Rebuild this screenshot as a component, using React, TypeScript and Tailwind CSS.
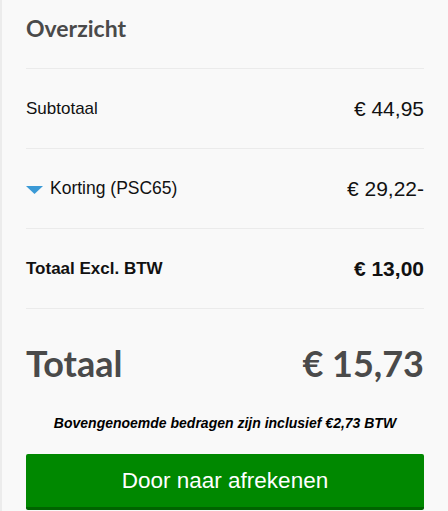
export default function App() {
  const rows = [
    { label: 'Subtotaal', value: '€ 44,95' },
    { label: 'Korting (PSC65)', value: '€ 29,22-', toggle: true },
    { label: 'Totaal Excl. BTW', value: '€ 13,00', bold: true },
  ];

  return (
    <div className="h-[511px] w-full overflow-hidden border-l-2 border-[#ececec] bg-[#f9f9f9] px-[24px] font-['Liberation_Sans',Arial,sans-serif] text-[#111]">
      <div className="h-[68px] pt-[14px]">
        <h2 className="font-['Lato',sans-serif] text-[23px] font-bold leading-[28px] text-[#4a4a4a]">Overzicht</h2>
      </div>

      {rows.map((r) => (
        <div key={r.label} className="flex h-[80px] items-center justify-between border-t border-[#ebebeb]">
          <div className={`flex items-center ${r.bold ? 'text-[17px] font-bold' : 'text-[17px]'}`}>
            {r.toggle && (
              <svg width="17" height="8" viewBox="0 0 17 8" className="mr-[7px] mt-[2px]">
                <polygon points="0,0 17,0 8.5,8" fill="#3b9ad6" />
              </svg>
            )}
            <span className={r.toggle ? 'text-[17.5px]' : ''}>{r.label}</span>
          </div>
          <span className={r.bold ? 'text-[21px] font-bold' : 'text-[21px]'}>{r.value}</span>
        </div>
      ))}

      <div className="border-t border-[#ebebeb] pt-[33px]">
        <div className="flex items-center justify-between font-['Lato',sans-serif] text-[36px] font-bold leading-[42px] text-[#4a4a4a]">
          <span>Totaal</span>
          <span>€ 15,73</span>
        </div>
        <p className="mt-[31px] text-center text-[14px] font-bold italic leading-[16px] text-black">
          Bovengenoemde bedragen zijn inclusief €2,73 BTW
        </p>
        <button className="mt-[23px] flex h-[56px] w-full items-center justify-center rounded-[2px] border-b-[3px] border-[#006400] bg-[#008800] text-[22.5px] text-white">
          Door naar afrekenen
        </button>
      </div>
    </div>
  );
}
